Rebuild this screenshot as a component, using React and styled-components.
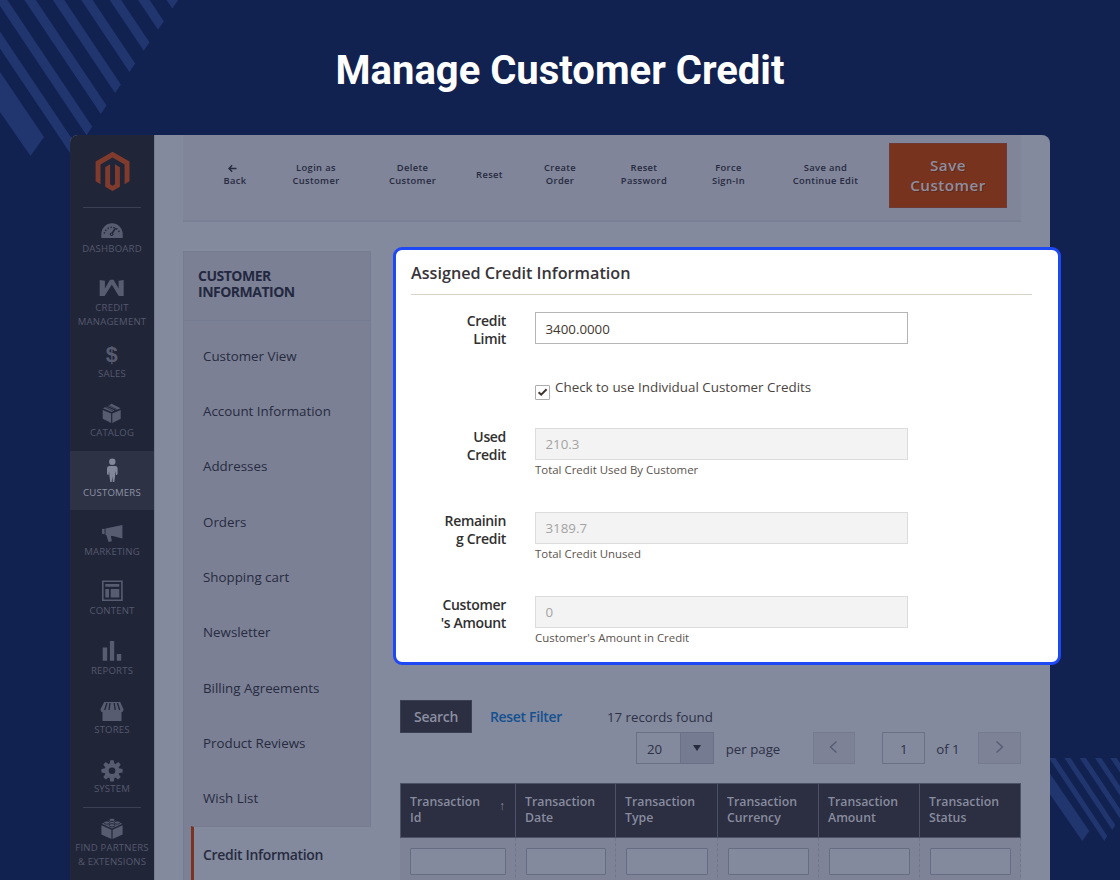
import React from "react";
import styled, { createGlobalStyle } from "styled-components";

const GlobalStyle = createGlobalStyle`
  * { box-sizing: border-box; }
  body {
    margin: 0;
    background: #112150;
    font-family: "Open Sans", "Noto Sans", sans-serif;
    overflow: hidden;
  }
`;

const Stage = styled.div`
  position: relative;
  width: 1120px;
  height: 880px;
  overflow: hidden;
  background: #112150;
`;

const Stripes = styled.svg`
  position: absolute;
  inset: 0;
  fill: #21366e;
`;

const Heading = styled.h1`
  position: relative;
  margin: 0;
  height: 135px;
  padding-top: 47px;
  text-align: center;
  color: #fff;
  font: 700 40px/48px Roboto, sans-serif;
`;

const Window = styled.div`
  position: relative;
  display: flex;
  width: 980px;
  height: 745px;
  margin: 0 auto;
  border-radius: 8px 8px 0 0;
  background: #838a9e;
`;

/* ---------- sidebar ---------- */

const Sidebar = styled.nav`
  width: 84px;
  flex: none;
  border-radius: 8px 0 0 0;
  background: #212538;
  box-shadow: 1px 0 0 #747b90;
`;

const LogoBox = styled.div`
  height: 72px;
  padding: 16px 0 0 25px;
`;

const Rule = styled.div`
  height: 1px;
  margin: 0 13px -1px;
  background: #3b4054;
`;

const NavItem = styled.a`
  display: flex;
  flex-direction: column;
  align-items: center;
  height: ${(p) => p.$height || 59.3}px;
  padding-top: 7px;
  background: ${(p) => (p.$active ? "#2e3245" : "transparent")};
  color: ${(p) => (p.$active ? "#82879a" : "#575c71")};
  svg {
    flex: none;
    width: 32px;
    height: 27px;
    fill: currentColor;
  }
`;

const NavLabel = styled.span`
  margin-top: 0.6px;
  color: ${(p) => (p.$active ? "#8d92a5" : "#54596d")};
  font-size: 9.6px;
  line-height: 14px;
  letter-spacing: 0.18px;
  text-align: center;
  text-transform: uppercase;
  white-space: pre;
`;

/* ---------- page ---------- */

const Main = styled.main`
  width: 896px;
  padding: 0 29px;
`;

const Toolbar = styled.div`
  display: flex;
  height: 87px;
  padding: 7.5px 0 0 19px;
  background: #80859a;
  border-bottom: 2px solid #7a8095;
`;

const ToolButton = styled.button`
  width: ${(p) => p.$width}px;
  height: 65px;
  flex: none;
  padding: 0;
  border: 0;
  background: none;
  color: #272b3f;
  font: 600 9.4px/12.6px "Open Sans", sans-serif;
  letter-spacing: 0.35px;
  white-space: pre-line;
  svg {
    display: block;
    margin: 0 auto;
    transform: translateX(-2.5px);
  }
`;

const SaveButton = styled.button`
  width: 118px;
  height: 65px;
  margin-left: auto;
  margin-right: 14px;
  padding: 0 0 1px;
  border: 1px solid #6e3a36;
  background: #78331f;
  color: #8f8e9d;
  font: 600 15.2px/20px "Open Sans", sans-serif;
  letter-spacing: 0.5px;
  text-shadow: 1px 1px 0 rgba(50, 25, 30, 0.35);
  white-space: pre-line;
`;

const Columns = styled.div`
  display: flex;
  gap: 29px;
  padding-top: 29px;
`;

const Tabs = styled.aside`
  width: 188px;
  height: 640px;
  flex: none;
  background: #7b8095;
  border: 1px solid #767c91;
`;

const TabsTitle = styled.div`
  height: 68.5px;
  margin-bottom: 7.7px;
  padding: 16px 14px 0;
  border-bottom: 1px solid #757b90;
  color: #232840;
  font-size: 14px;
  font-weight: 700;
  line-height: 16px;
  letter-spacing: -0.5px;
  white-space: pre-line;
`;

const Tab = styled.a`
  display: flex;
  align-items: center;
  height: 55.3px;
  margin: 0 -1px 0 7px;
  padding-left: 12px;
  color: #272b3f;
  font-size: 13.35px;
  ${(p) =>
    p.$active &&
    `
    padding-left: 9px;
    border-left: 3px solid #7d3220;
    border-top: 1px solid #767c91;
    background: #838a9e;
    font-size: 14px;
    font-weight: 600;
    letter-spacing: -0.33px;
  `}
`;

const Content = styled.section`
  width: 621px;
  flex: none;
`;

/* ---------- highlighted card ---------- */

const Card = styled.div`
  position: relative;
  width: 668px;
  height: 418.5px;
  margin: -4.5px 0 0 -7px;
  padding: 12px 26px 0 15px;
  border: 3px solid #1f48f5;
  border-radius: 9px;
  background: #fff;
`;

const CardTitle = styled.h2`
  height: 33px;
  margin: 0 0 17px;
  border-bottom: 1px solid #d8d3c9;
  color: #38343a;
  font-size: 16.2px;
  font-weight: 600;
  line-height: 22px;
`;

const Field = styled.div`
  display: flex;
  height: ${(p) => p.$height}px;
`;

const Label = styled.label`
  width: 95px;
  margin-right: 29px;
  padding-top: 0.3px;
  color: #303030;
  font-size: 14px;
  font-weight: 600;
  line-height: 18px;
  letter-spacing: -0.33px;
  text-align: right;
  white-space: pre-line;
`;

const Control = styled.div`
  width: 373px;
`;

const Input = styled.div`
  height: 32px;
  padding-left: 9.5px;
  border: 1px solid ${(p) => (p.$disabled ? "#dcdcdc" : "#b5b5b5")};
  background: ${(p) => (p.$disabled ? "#f3f3f3" : "#fff")};
  color: ${(p) => (p.$disabled ? "#a3a3a3" : "#41362f")};
  font-size: 13.3px;
  line-height: ${(p) => (p.$disabled ? 31 : 32)}px;
`;

const Note = styled.div`
  padding-top: 2px;
  color: #5b534e;
  font-size: 11.45px;
  line-height: 15px;
`;

const CheckRow = styled.div`
  display: flex;
  gap: 5px;
  height: 48px;
  color: #4a4441;
  font-size: 13.4px;
  line-height: 18px;
`;

const Checkbox = styled.span`
  width: 15px;
  height: 15px;
  margin-top: 7px;
  border: 1px solid #adadad;
  border-radius: 1px;
  svg {
    display: block;
  }
`;

/* ---------- grid controls ---------- */

const Actions = styled.div`
  display: flex;
  align-items: center;
  height: 33px;
  margin-top: 35px;
  color: #2d3145;
  font-size: 13.25px;
`;

const SearchButton = styled.button`
  width: 72px;
  height: 33px;
  margin-right: 18px;
  padding: 0;
  border: 1px solid #3a3f52;
  background: #2c2e41;
  color: #8b8fa1;
  font: 600 14px "Open Sans", sans-serif;
  letter-spacing: -0.3px;
`;

const ResetLink = styled.a`
  width: 117px;
  color: #15508f;
  font-size: 14px;
  font-weight: 600;
  letter-spacing: -0.33px;
`;

const Pager = styled.div`
  display: flex;
  height: 32px;
  margin-top: -1px;
  padding-left: 236px;
  color: #2d3145;
  font-size: 13.25px;
  line-height: 34px;
`;

const Select = styled.div`
  display: flex;
  width: 78px;
  margin-right: 12px;
  border: 1px solid #6a7086;
  line-height: 32px;
  span {
    flex: 1;
    padding-left: 10px;
  }
`;

const Arrow = styled.div`
  display: grid;
  place-items: center;
  width: 33px;
  border-left: 1px solid #6a7086;
  background: #757b90;
`;

const PerPage = styled.span`
  width: 87px;
`;

const PageButton = styled.button`
  display: grid;
  place-items: center;
  width: 43px;
  height: 32px;
  padding: 0 0 2px;
  border: 1px solid #747a8f;
  background: #7d8297;
`;

const PageInput = styled.div`
  width: 43px;
  margin: 0 11px 0 27px;
  border: 1px solid #6a7086;
  line-height: 32px;
  text-align: center;
`;

const OfPages = styled.span`
  width: 42px;
`;

const Grid = styled.div`
  display: grid;
  grid-template-columns: 116px 100px 102px 101px 101px 101px;
  margin-top: 19px;
`;

const HeadCell = styled.div`
  display: flex;
  justify-content: space-between;
  height: 54.5px;
  padding: 10px 10px 0 9px;
  border: solid #4d5266;
  border-width: 1px 1px 1px 0;
  background: #2c2e41;
  color: #888c9f;
  font-size: 12.3px;
  font-weight: 600;
  line-height: 16px;
  white-space: pre-line;
  &:first-child {
    border-left-width: 1px;
  }
`;

const Sort = styled.span`
  padding-top: 4px;
  font-size: 12px;
  font-weight: 400;
`;

const FilterCell = styled.div`
  height: 50px;
  padding: 10px 9px 0 10px;
  border-right: 1px dashed #6f758b;
  background: #7e8398;
`;

const FilterInput = styled.div`
  height: 27px;
  border: 1px solid #666c82;
  border-radius: 1px;
  background: #838a9e;
`;

const gear = Array.from({ length: 8 }, (_, i) => i * 45);

const icons = {
  dashboard: (
    <>
      <path d="M5.3 24v-4a10.7 10.7 0 0 1 21.4 0v4z" />
      <g stroke="#212538" fill="none">
        <path d="M8.2 19.5a8 8 0 0 1 15.6 0" strokeWidth="1.5" strokeDasharray="1.3 1.7" />
        <path d="M14.9 21.3l4.6-7.2" strokeWidth="1.6" />
      </g>
      <circle cx="15.6" cy="20.3" r="1.8" fill="#212538" />
      <circle cx="15.6" cy="20.3" r=".8" />
    </>
  ),
  credit: (
    <path d="M3.7 5.9l5.2.8v7.8l5.1-8.800h3.600l5 8.800V6.700l5.100-.8V22h-4.900L15.800 10.800 8.600 22H3.700z" />
  ),
  sales: (
    <text x="15.7" y="21.5" textAnchor="middle" fontFamily="Liberation Sans, sans-serif" fontSize="21.5" fontWeight="700">$</text>
  ),
  catalog: (
    <>
      <path d="M6.7 11l8.4 3.6V24l-8.4-4.3zM16.3 14.6l8.4-3.6v8.7L16.3 24zM6.9 9.3l3.3-1.6 8.5 3.8-3 1.6zM11.8 6.9l3.9-2.2 8.8 4.6-4 1.7z" />
      <path d="M9.3 8.2l8.5 4.2M12.5 6.3l8.5 4.3" stroke="#212538" strokeWidth=".7" />
    </>
  ),
  customers: (
    <>
      <circle cx="16.3" cy="3.8" r="3.2" />
      <path d="M13.4 7.9h5.9c1.5 0 2.3 1.3 2.3 2.8v5.5l-1.5 1-.6-4.1-.4 4.8-.8 6.1h-1.5l-.5-5.6-.6 5.6h-1.5l-.7-6.1-.5-4.8-.5 4.1-1.5-1v-5.5c0-1.5.9-2.8 2.4-2.8z" />
    </>
  ),
  marketing: (
    <path d="M6 12.1l2.6-.4v5.5L6 16.7zM9.5 11.4L26.4 8v13.4l-9.7-2.3-1.8-.1.9 5.3-3.2.6-2.2-6.6-.9-.3z" />
  ),
  content: (
    <path fillRule="evenodd" d="M6 3.4h20.7V24H6zM7.6 5v17.4h17.5V5zM9.3 7h14v2.8h-14zM9.3 12H13v8.6H9.3zM14.7 12h8.6v8.6h-8.6z" />
  ),
  reports: <path d="M6.7 11.4h4.5v13.3H6.7zM13.9 5h4.3v19.7h-4.3zM20.8 18h4.4v6.7h-4.4z" />,
  stores: (
    <>
      <path d="M8.2 7h16l3.3 7.2c0 1.9-.8 2.8-2 2.8v9h-19v-9c-1.3 0-2-.9-2-2.8z" />
      <path d="M11 8l-2.3 7M14 8l-1 7M18.2 8l1 7M21.4 8l2.3 7" stroke="#212538" strokeWidth="1.3" />
    </>
  ),
  system: (
    <>
      {gear.map((a) => (
        <path key={a} d="M13.5 9.4l.8-4.2h3.4l.8 4.2z" transform={`rotate(${a} 16 15.8)`} />
      ))}
      <circle cx="16" cy="15.8" r="5.4" fill="none" stroke="currentColor" strokeWidth="4.2" />
    </>
  ),
  partners: (
    <>
      <path d="M5.4 11.2l10 4.6V25l-10-4.6zM16.6 15.8l10-4.6v9.2l-10 4.6zM5.7 9.8L16 5l10.3 4.8L16 14.6z" />
      <g stroke="#212538" strokeWidth=".9">
        <ellipse cx="16" cy="5.9" rx="3" ry="1.6" />
        <ellipse cx="10.8" cy="8.6" rx="3" ry="1.6" />
        <ellipse cx="21.2" cy="8.6" rx="3" ry="1.6" />
        <ellipse cx="16" cy="11.3" rx="3" ry="1.6" />
      </g>
    </>
  ),
};

const navItems = [
  { icon: "dashboard", label: "Dashboard", height: 59.5 },
  { icon: "credit", label: "Credit\nManagement", height: 66 },
  { icon: "sales", label: "Sales" },
  { icon: "catalog", label: "Catalog" },
  { icon: "customers", label: "Customers", active: true },
  { icon: "marketing", label: "Marketing" },
  { icon: "content", label: "Content" },
  { icon: "reports", label: "Reports" },
  { icon: "stores", label: "Stores" },
  { icon: "system", label: "System" },
];

const toolButtons = [
  { label: "Login as\nCustomer", width: 96 },
  { label: "Delete\nCustomer", width: 97 },
  { label: "Reset", width: 57 },
  { label: "Create\nOrder", width: 84 },
  { label: "Reset\nPassword", width: 84 },
  { label: "Force\nSign-In", width: 85 },
  { label: "Save and\nContinue Edit", width: 109 },
];

const tabs = [
  "Customer View",
  "Account Information",
  "Addresses",
  "Orders",
  "Shopping cart",
  "Newsletter",
  "Billing Agreements",
  "Product Reviews",
  "Wish List",
  "Credit Information",
];

const readonlyFields = [
  { label: "Used\nCredit", value: "210.3", note: "Total Credit Used By Customer" },
  { label: "Remainin\ng Credit", value: "3189.7", note: "Total Credit Unused" },
  { label: "Customer\n's Amount", value: "0", note: "Customer's Amount in Credit" },
];

const columns = ["Id", "Date", "Type", "Currency", "Amount", "Status"];

const NavEntry = ({ icon, label, height, active }) => (
  <NavItem $height={height} $active={active}>
    <svg viewBox="0 0 32 27">{icons[icon]}</svg>
    <NavLabel $active={active}>{label}</NavLabel>
  </NavItem>
);

const Background = () => (
  <Stripes width="1120" height="880">
    <path d="M0 72L44 137 30.5 156 0 112z" />
    {[-1, 0, 1, 2, 3, 4, 5, 6].map((i) => {
      const x = 92.3 + i * 14.3;
      const y = 126.7 - i * 21.1;
      return <path key={i} d={`M${x} ${y}l-5.8 8.5-150-224h11.4z`} />;
    })}
    <svg x="1040" y="758" width="80" height="122" viewBox="1040 758 80 122">
      <path d="M1089.3 831l-7 10L1040 780v-21z" />
      {[0, 1, 2, 3, 4].map((i) => (
        <path key={i} d={`M${1107.3 + i * 8} ${836 - i * 11}l-3 5-100-150h6.3z`} />
      ))}
    </svg>
  </Stripes>
);

const App = () => (
  <>
    <GlobalStyle />
    <Stage>
      <Background />
      <Heading>Manage Customer Credit</Heading>
      <Window>
        <Sidebar>
          <LogoBox>
            <svg width="35" height="40" viewBox="0 0 35 40" fill="#803b2d">
              <path d="M17.5.8l17 9.8v19.700l-4.900 2.900V13.500l-12.100-7-12 7v19.700L.6 30.300V10.600z" />
              <path d="M10.200 16.200l4.900-2.900v20l2.400 1.500 2.500-1.500v-20l4.900 2.900v19.600l-7.400 4.200-7.300-4.200z" />
            </svg>
          </LogoBox>
          <Rule />
          {navItems.map((item) => (
            <NavEntry key={item.icon} {...item} />
          ))}
          <Rule />
          <NavEntry icon="partners" label={"Find Partners\n& Extensions"} height={73} />
        </Sidebar>

        <Main>
          <Toolbar>
            <ToolButton $width={66}>
              <svg width="10" height="13" viewBox="0 0 10 13" fill="none" stroke="#272b3f" strokeWidth="1.4">
                <path d="M9 6.5H1.5M4.7 3.3L1.5 6.5l3.2 3.2" />
              </svg>
              Back
            </ToolButton>
            {toolButtons.map((b) => (
              <ToolButton key={b.label} $width={b.width}>{b.label}</ToolButton>
            ))}
            <SaveButton>{"Save\nCustomer"}</SaveButton>
          </Toolbar>

          <Columns>
            <Tabs>
              <TabsTitle>{"CUSTOMER\nINFORMATION"}</TabsTitle>
              {tabs.map((t, i) => (
                <Tab key={t} $active={i === tabs.length - 1}>{t}</Tab>
              ))}
            </Tabs>

            <Content>
              <Card>
                <CardTitle>Assigned Credit Information</CardTitle>
                <Field $height={66}>
                  <Label>{"Credit\nLimit"}</Label>
                  <Control>
                    <Input>3400.0000</Input>
                  </Control>
                </Field>
                <Field $height={50}>
                  <Label />
                  <CheckRow>
                    <Checkbox>
                      <svg width="13" height="13" viewBox="0 0 13 13" fill="none" stroke="#41362f" strokeWidth="2">
                        <path d="M2.6 6.2l2.6 2.500 5.400-5.500" />
                      </svg>
                    </Checkbox>
                    Check to use Individual Customer Credits
                  </CheckRow>
                </Field>
                {readonlyFields.map((f) => (
                  <Field key={f.note} $height={84.3}>
                    <Label>{f.label}</Label>
                    <Control>
                      <Input $disabled>{f.value}</Input>
                      <Note>{f.note}</Note>
                    </Control>
                  </Field>
                ))}
              </Card>

              <Actions>
                <SearchButton>Search</SearchButton>
                <ResetLink>Reset Filter</ResetLink>
                17 records found
              </Actions>
              <Pager>
                <Select>
                  <span>20</span>
                  <Arrow>
                    <svg width="8" height="6" fill="#272b3f"><path d="M0 0h8L4 6z" /></svg>
                  </Arrow>
                </Select>
                <PerPage>per page</PerPage>
                <PageButton>
                  <svg width="9" height="14" fill="none" stroke="#555b72" strokeWidth="1.3">
                    <path d="M7.5 1.5L1.5 7l6 5.5" />
                  </svg>
                </PageButton>
                <PageInput>1</PageInput>
                <OfPages>of 1</OfPages>
                <PageButton>
                  <svg width="9" height="14" fill="none" stroke="#555b72" strokeWidth="1.3">
                    <path d="M1.5 1.5l6 5.5-6 5.5" />
                  </svg>
                </PageButton>
              </Pager>

              <Grid>
                {columns.map((c, i) => (
                  <HeadCell key={c}>
                    {`Transaction\n${c}`}
                    {i === 0 && <Sort>↑</Sort>}
                  </HeadCell>
                ))}
                {columns.map((c) => (
                  <FilterCell key={c}>
                    <FilterInput />
                  </FilterCell>
                ))}
              </Grid>
            </Content>
          </Columns>
        </Main>
      </Window>
    </Stage>
  </>
);

export default App;
